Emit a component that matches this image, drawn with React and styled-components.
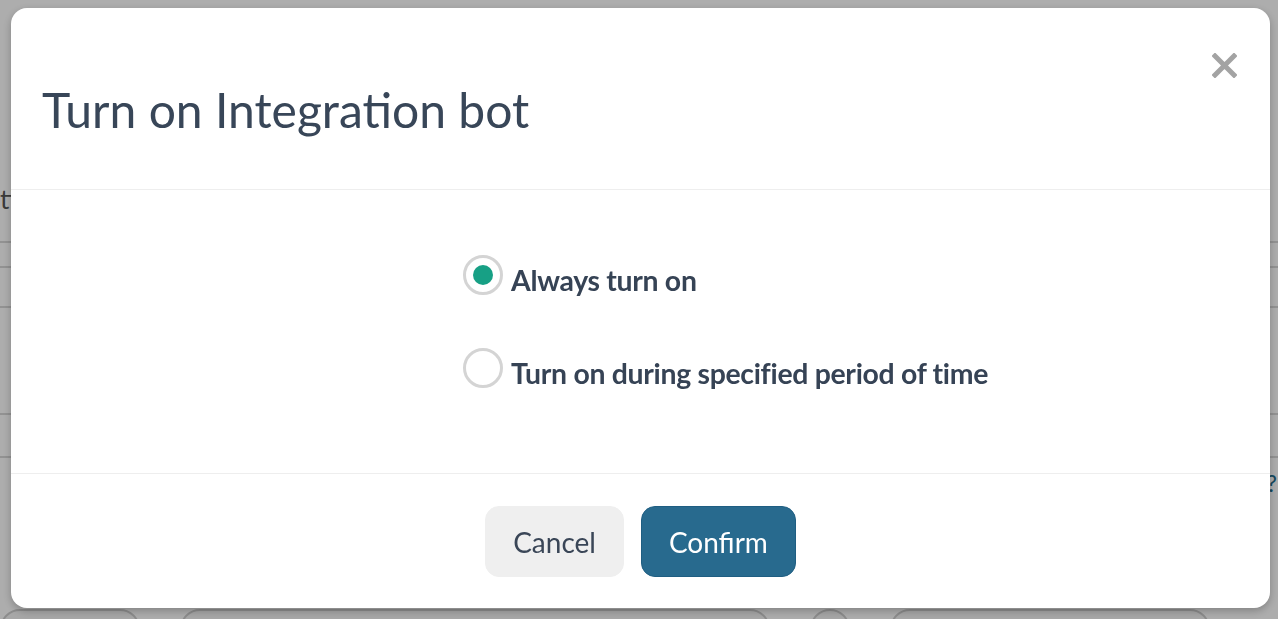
import React, { useState } from 'react';
import styled, { createGlobalStyle } from 'styled-components';

const GlobalStyle = createGlobalStyle`
  html, body {
    margin: 0;
    padding: 0;
    overflow: hidden;
    background: #ffffff;
  }
  * {
    box-sizing: border-box;
  }
`;

const Page = styled.div`
  width: 1278px;
  height: 619px;
  display: flex;
  flex-direction: column;
  font-family: 'Lato', 'Liberation Sans', sans-serif;
  color: #666;
`;

const PageHead = styled.div`
  height: 243px;
  display: flex;
  align-items: flex-end;
  padding-bottom: 26px;
  border-bottom: 2px solid #d8d8d8;
  font-size: 26px;
  color: #555;
`;

const PageRow = styled.div`
  height: ${(p) => p.$h}px;
  border-bottom: ${(p) => (p.$plain ? 'none' : '2px solid #d8d8d8')};
  display: flex;
  justify-content: flex-end;
  align-items: flex-start;
  padding-top: ${(p) => p.$pt || 0}px;
`;

const HelpMark = styled.span`
  font-size: 24px;
  line-height: 1;
  color: #1e6c8c;
  margin-right: 1px;
`;

const PageFoot = styled.div`
  flex: 1;
  display: flex;
  align-items: flex-end;
  gap: 40px;
`;

const Pill = styled.div`
  width: ${(p) => p.$w}px;
  height: 40px;
  margin-bottom: -30px;
  border: 2px solid #cfcfcf;
  border-radius: 20px;
  background: #f6f6f6;
`;

const Overlay = styled.div`
  position: fixed;
  inset: 0;
  background: rgba(0, 0, 0, 0.32);
  display: flex;
  align-items: flex-start;
  padding: 8px 8px 0 11px;
`;

const Modal = styled.div`
  width: 1259px;
  height: 600px;
  background: #fff;
  border-radius: 16px;
  box-shadow: 0 3px 8px rgba(0, 0, 0, 0.25);
  display: flex;
  flex-direction: column;
  font-family: 'Lato', 'Liberation Sans', sans-serif;
  color: #3a4657;
`;

const Header = styled.div`
  height: 182px;
  display: flex;
  justify-content: space-between;
  padding: 0 33px 0 31px;
  border-bottom: 1px solid #eeeeee;
`;

const Title = styled.h2`
  margin: 0;
  align-self: center;
  padding-top: 22px;
  font-size: 48px;
  font-weight: 400;
  color: #384658;
  letter-spacing: 0;
`;

const CloseButton = styled.button`
  align-self: flex-start;
  margin-top: 45px;
  width: 25px;
  height: 25px;
  padding: 0;
  border: 0;
  background: none;
  cursor: pointer;
  display: flex;
`;

const Body = styled.div`
  height: 284px;
  display: flex;
  flex-direction: column;
  gap: 53px;
  padding: 65px 0 0 452px;
  border-bottom: 1px solid #eeeeee;
`;

const Option = styled.label`
  height: 40px;
  display: flex;
  align-items: center;
  gap: 8px;
  cursor: pointer;
`;

const RadioCircle = styled.span`
  width: 40px;
  height: 40px;
  flex: none;
  border-radius: 50%;
  border: 3px solid #d4d4d4;
  display: flex;
  align-items: center;
  justify-content: center;

  &::after {
    content: '';
    width: 20px;
    height: 20px;
    border-radius: 50%;
    background: ${(p) => (p.$checked ? '#17a085' : 'transparent')};
  }
`;

const OptionText = styled.span`
  font-size: 28.4px;
  line-height: 1;
  font-weight: 700;
  color: #364355;
  padding-top: 10px;
  letter-spacing: -0.3px;
`;

const Footer = styled.div`
  flex: 1;
  display: flex;
  justify-content: center;
  align-items: flex-start;
  gap: 17px;
  padding-top: 32px;
`;

const Button = styled.button`
  height: 71px;
  padding: 0 27px;
  border-radius: 14px;
  font-family: inherit;
  font-size: 28px;
  font-weight: 400;
  cursor: pointer;
  border: 1px solid ${(p) => (p.$primary ? '#1f5e82' : '#efefef')};
  background: ${(p) => (p.$primary ? '#286a8e' : '#efefef')};
  color: ${(p) => (p.$primary ? '#ffffff' : '#3a4657')};
`;

const options = [
  { id: 'always', label: 'Always turn on' },
  { id: 'period', label: 'Turn on during specified period of time' },
];

export default function App() {
  const [mode, setMode] = useState('always');

  return (
    <>
      <GlobalStyle />
      <Page>
        <PageHead>tings</PageHead>
        <PageRow $h={25} />
        <PageRow $h={40} />
        <PageRow $h={107} />
        <PageRow $h={43} />
        <PageRow $h={60} $pt={13} $plain>
          <HelpMark>?</HelpMark>
        </PageRow>
        <PageFoot>
          <Pill $w={140} />
          <Pill $w={590} />
          <Pill $w={40} />
          <Pill $w={320} />
        </PageFoot>
      </Page>
      <Overlay>
        <Modal role="dialog" aria-labelledby="modal-title">
          <Header>
            <Title id="modal-title">Turn on Integration bot</Title>
            <CloseButton aria-label="Close">
              <svg width="25" height="25" viewBox="0 0 25 25">
                <path
                  d="M3 3 L22 22 M22 3 L3 22"
                  stroke="#a3a3a3"
                  strokeWidth="5"
                  strokeLinecap="square"
                />
              </svg>
            </CloseButton>
          </Header>
          <Body>
            {options.map((o) => (
              <Option key={o.id} onClick={() => setMode(o.id)}>
                <RadioCircle $checked={mode === o.id} />
                <OptionText>{o.label}</OptionText>
              </Option>
            ))}
          </Body>
          <Footer>
            <Button>Cancel</Button>
            <Button $primary>Confirm</Button>
          </Footer>
        </Modal>
      </Overlay>
    </>
  );
}
